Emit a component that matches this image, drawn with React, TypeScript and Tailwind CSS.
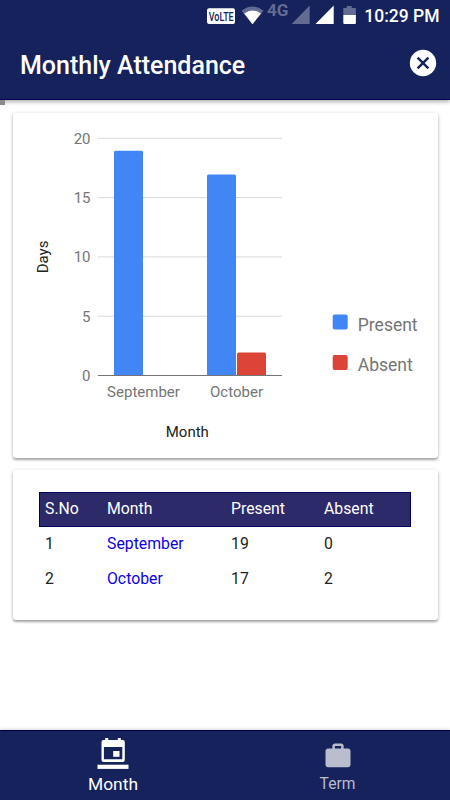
import React from 'react';

interface IAttendance {
  id: number;
  month: string;
  present: number;
  absent: number;
}

const attendance: IAttendance[] = [
  { id: 1, month: 'September', present: 19, absent: 0 },
  { id: 2, month: 'October', present: 17, absent: 2 },
];

const ticks = [0, 5, 10, 15, 20];

// px per day on the chart scale
const BASE_Y = 375.5 - 113;
const UNIT = 11.86;

const barPath = (x: number, value: number) => {
  const h = value * UNIT - 0.7;
  const top = BASE_Y - h;
  return `M${x} ${BASE_Y}V${top + 1.5}q0 -1.5 1.5 -1.5h26q1.5 0 1.5 1.5V${BASE_Y}z`;
};

const StatusBar = () => (
  <div className="flex h-8 items-center justify-end pr-[10.5px] text-white">
    <svg width="152" height="32" viewBox="207 0 152 32" className="shrink-0">
      <rect x="207" y="8.3" width="28" height="15.7" rx="2" fill="#fff" />
      <text x="208.7" y="21" fontSize="13.5" fontWeight="500" fill="#16225b" textLength="25" lengthAdjust="spacingAndGlyphs">VoLTE</text>
      <path d="M241.5 10.8Q252.5 2.2 263.5 10.8L252.5 24.2z" fill="#626b92" />
      <path d="M244.2 13.5Q252.5 7.5 261 13.5L252.5 24.2z" fill="#fff" />
      <text x="267" y="16.3" fontSize="16" fontWeight="700" fill="#626b92" textLength="21.5" lengthAdjust="spacingAndGlyphs">4G</text>
      <path d="M309.7 5.5V24H291.7z" fill="#626b92" />
      <path d="M333.7 5.5V24H315.5z" fill="#fff" />
      <path d="M346.7 6h5v1.9h4.2V15h-12.6V7.9h3.4z" fill="#626b92" />
      <path d="M343.3 15h12.6v8q0 1 -1 1h-10.6q-1 0 -1 -1z" fill="#fff" />
    </svg>
    <span className="ml-[5px] text-[17.5px] leading-8 font-medium whitespace-nowrap">10:29 PM</span>
  </div>
);

const Chart = () => (
  <svg width="425" height="345" viewBox="13 0 425 345" className="block">
    {ticks.map((tick) => (
      <g key={tick}>
        <rect x="98" y={BASE_Y - tick * UNIT - 0.5} width="184" height="1" fill={tick === 0 ? '#757575' : '#d9d9d9'} />
        <text x="90.5" y={BASE_Y - tick * UNIT + 5.3} fontSize="15" textAnchor="end" fill="#757575">{tick}</text>
      </g>
    ))}
    {attendance.map((item, i) => (
      <g key={item.id}>
        <path d={barPath(114 + i * 93, item.present)} fill="#4285f4" />
        {item.absent > 0 && <path d={barPath(144 + i * 93, item.absent)} fill="#db4437" />}
        <text x={143.5 + i * 93} y="284" fontSize="15" textAnchor="middle" fill="#757575">{item.month}</text>
      </g>
    ))}
    <rect x="98" y={BASE_Y - 0.5} width="184" height="1" fill="#757575" />
    <text x="187.3" y="324" fontSize="15" textAnchor="middle" fill="#222">Month</text>
    <text transform="translate(47.8 144) rotate(-90)" fontSize="15" textAnchor="middle" fill="#222">Days</text>
    <rect x="332.7" y="201.5" width="15" height="15" rx="2" fill="#4285f4" />
    <text x="357.8" y="217.5" fontSize="17.5" fill="#757575">Present</text>
    <rect x="332.7" y="242" width="15" height="15" rx="2" fill="#db4437" />
    <text x="357.8" y="258" fontSize="17.5" fill="#757575">Absent</text>
  </svg>
);

const AttendanceTable = () => (
  <div className="w-[372px] text-[15.8px] leading-[33px] text-[#212121]">
    <div className="grid h-[35px] grid-cols-[62px_124px_93px_93px] border border-[#00005c] bg-[#2c2a69] leading-[31px] text-white">
      <span className="pl-[5px]">S.No</span>
      <span className="pl-[5px]">Month</span>
      <span className="pl-[5px]">Present</span>
      <span className="pl-[5px]">Absent</span>
    </div>
    {attendance.map((item) => (
      <div key={item.id} className="grid h-[35px] grid-cols-[62px_124px_93px_93px]">
        <span className="pl-[6px]">{item.id}</span>
        <span className="pl-[6px] text-[#0b00ee]">{item.month}</span>
        <span className="pl-[6px]">{item.present}</span>
        <span className="pl-[6px]">{item.absent}</span>
      </div>
    ))}
  </div>
);

const App = () => {
  return (
    <div className="flex h-[800px] w-[450px] flex-col overflow-hidden bg-white font-[Roboto,sans-serif]">
      <header className="z-10 h-[100px] shrink-0 border-b border-[#00004d] bg-[#16225b] shadow-[0_2px_4px_rgba(0,0,0,0.3)]">
        <StatusBar />
        <div className="flex h-[66px] items-center justify-between pr-[13.5px] pl-5">
          <h1 className="mt-[2px] text-[25px] leading-[30px] font-medium text-white">Monthly Attendance</h1>
          <button aria-label="Close" className="-mt-[4px]">
            <svg width="28" height="28" viewBox="0 0 28 28">
              <circle cx="14" cy="14" r="13.2" fill="#fff" />
              <path d="M8.6 8.6l10.8 10.8M19.4 8.6L8.6 19.4" stroke="#16225b" strokeWidth="2.4" />
            </svg>
          </button>
        </div>
      </header>
      <div className="z-20 h-[5px] w-[5px] shrink-0 bg-[#8c8c8c]" />

      <main className="flex grow flex-col gap-3 px-[12.5px] pt-[8px]">
        <section className="h-[345px] shrink-0 rounded-[3px] bg-white shadow-[0_2px_2px_rgba(0,0,0,0.24),0_1px_4px_rgba(0,0,0,0.2)]">
          <Chart />
        </section>
        <section className="h-[150px] shrink-0 rounded-[3px] bg-white pt-[22px] pl-[26.5px] shadow-[0_2px_2px_rgba(0,0,0,0.24),0_1px_4px_rgba(0,0,0,0.2)]">
          <AttendanceTable />
        </section>
      </main>

      <nav className="flex h-[70px] shrink-0 border-t border-[#00003c] bg-[#16225b] shadow-[0_-1px_3px_rgba(0,0,0,0.15)]">
        <div className="flex w-1/2 flex-col items-center pt-[7px] text-white">
          <svg width="32" height="32" viewBox="0 0 32 32">
            <path fillRule="evenodd" fill="#fff" d="M8.2 0h3v2h9.6V0h3v2h2q2 0 2 2v18q0 2 -2 2H6.5q-2 0 -2 -2V4q0 -2 2 -2h1.7zM6.9 9V21.2h18.4V9z" />
            <rect x="16.2" y="13" width="6.3" height="5.8" fill="#fff" />
            <rect x="0.5" y="26.7" width="31" height="4.2" fill="#fff" />
          </svg>
          <span className="mt-[3px] pl-[1px] text-[17.4px] leading-[22px]">Month</span>
        </div>
        <div className="flex w-1/2 flex-col items-center pt-[10px] text-[#b9bdce]">
          <svg width="30" height="30" viewBox="0 0 24 24" fill="currentColor">
            <path d="M20 6h-3.5V4c0-1.11-.89-2-2-2h-5c-1.11 0-2 .89-2 2v2H4c-1.11 0-2 .89-2 2v11c0 1.11.89 2 2 2h16c1.11 0 2-.89 2-2V8c0-1.11-.89-2-2-2zm-5.5 0h-5V4h5v2z" />
          </svg>
          <span className="mt-[2px] text-[15.6px] leading-[22px]">Term</span>
        </div>
      </nav>
    </div>
  );
};

export default App;
